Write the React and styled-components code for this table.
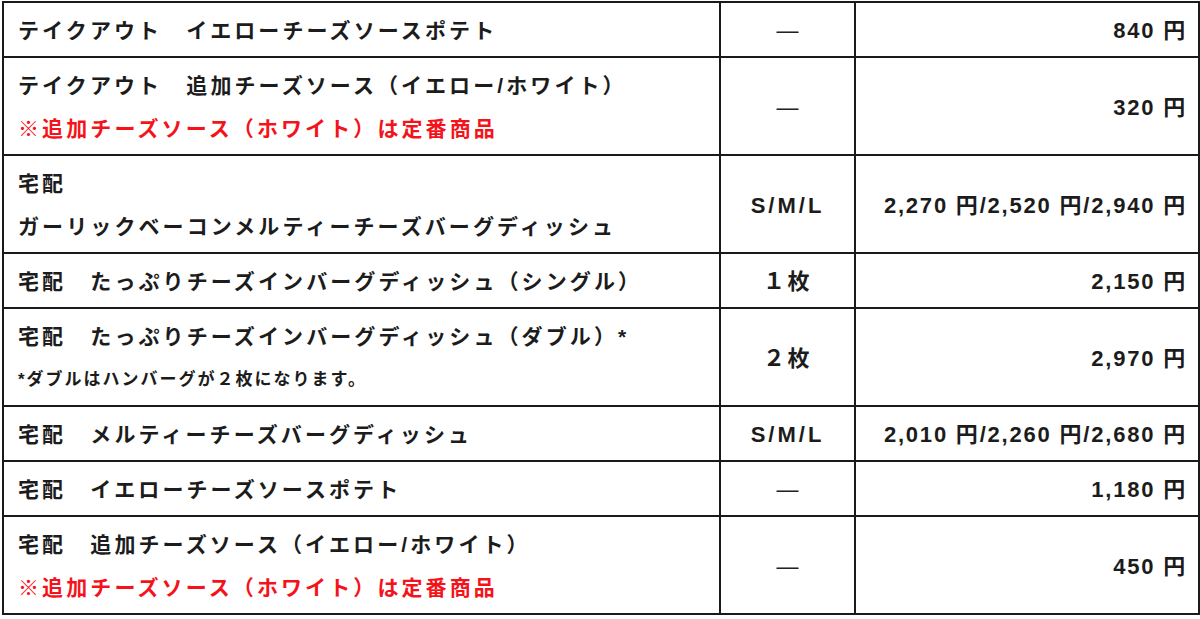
import React from 'react';
import styled, { createGlobalStyle } from 'styled-components';

const GlobalStyle = createGlobalStyle`
    html, body {
        margin: 0;
        padding: 0;
        background: #ffffff;
    }
    body {
        font-family: "Liberation Sans", "Noto Sans CJK JP", sans-serif;
        color: #1c1c1c;
    }
`

const MENU = [
    { lines: ['テイクアウト　イエローチーズソースポテト'], size: '—', price: '840 円' },
    { lines: ['テイクアウト　追加チーズソース（イエロー/ホワイト）'], note: '※追加チーズソース（ホワイト）は定番商品', size: '—', price: '320 円' },
    { lines: ['宅配', 'ガーリックベーコンメルティーチーズバーグディッシュ'], size: 'S/M/L', price: '2,270 円/2,520 円/2,940 円' },
    { lines: ['宅配　たっぷりチーズインバーグディッシュ（シングル）'], size: '１枚', price: '2,150 円' },
    { lines: ['宅配　たっぷりチーズインバーグディッシュ（ダブル）*'], small: '*ダブルはハンバーグが２枚になります。', size: '２枚', price: '2,970 円' },
    { lines: ['宅配　メルティーチーズバーグディッシュ'], size: 'S/M/L', price: '2,010 円/2,260 円/2,680 円' },
    { lines: ['宅配　イエローチーズソースポテト'], size: '—', price: '1,180 円' },
    { lines: ['宅配　追加チーズソース（イエロー/ホワイト）'], note: '※追加チーズソース（ホワイト）は定番商品', size: '—', price: '450 円' },
]

const Wrapper = styled.div`
    padding: 1px 2px 0 2px;
`

const Table = styled.table`
    width: 1196px;
    border-collapse: collapse;
    table-layout: fixed;
`

const Col = styled.col`
    width: ${props => props.$width}px;
`

const Cell = styled.td`
    border: 2px solid #1a1a1a;
    padding: 6px 13px 4px 14px;
    vertical-align: middle;
    font-weight: 700;
    font-size: 21px;
    line-height: 43px;
    letter-spacing: 3.1px;
    white-space: nowrap;
`

const SizeCell = styled(Cell)`
    text-align: center;
    padding-left: 2px;
    padding-right: 2px;
    font-size: 22px;
    letter-spacing: ${props => props.$latin ? '3px' : '2.5px'};
`

const Dash = styled.span`
    font-weight: 400;
    letter-spacing: 0;
    color: #222;
`

const PriceCell = styled(Cell)`
    text-align: right;
    font-size: 22px;
    letter-spacing: 1.8px;
    padding-left: 4px;
    padding-right: 11px;
`

const Line = styled.div`
    display: block;
`

const Note = styled.div`
    color: #f5131b;
`

const Small = styled.div`
    font-size: 17px;
    letter-spacing: 2px;
`

const App = () => {
    return (<>
        <GlobalStyle />
        <Wrapper>
            <Table>
                <colgroup>
                    <Col $width={717} />
                    <Col $width={135} />
                    <Col $width={344} />
                </colgroup>
                <tbody>
                    {MENU.map((item, i) =>
                        <tr key={i}>
                            <Cell>
                                {item.lines.map(line => <Line key={line}>{line}</Line>)}
                                {item.note && <Note>{item.note}</Note>}
                                {item.small && <Small>{item.small}</Small>}
                            </Cell>
                            <SizeCell $latin={item.size === 'S/M/L'}>
                                {item.size === '—' ? <Dash>―</Dash> : item.size}
                            </SizeCell>
                            <PriceCell>{item.price}</PriceCell>
                        </tr>)}
                </tbody>
            </Table>
        </Wrapper>
    </>);
}

export default App;
